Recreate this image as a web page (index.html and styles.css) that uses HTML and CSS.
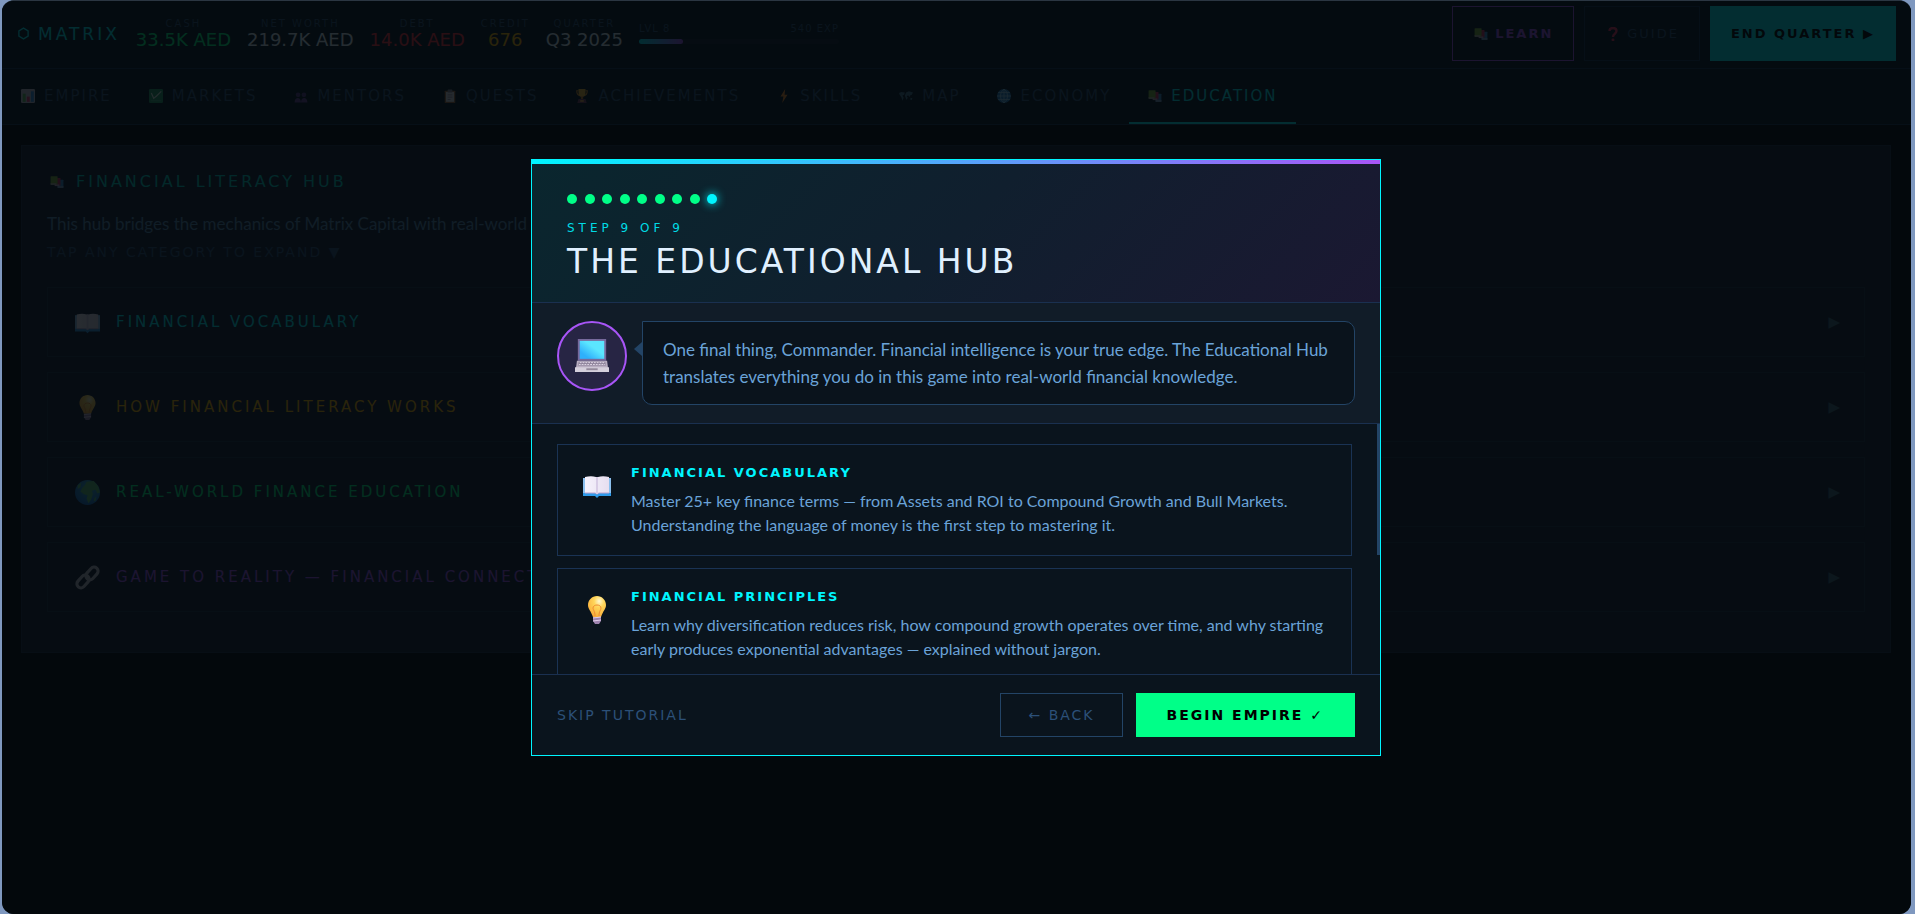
FILE: index.html
```html
<!DOCTYPE html>
<html lang="en">
<head>
    <meta charset="UTF-8">
    <meta name="viewport" content="width=device-width, initial-scale=1.0">
    <title>Matrix Capital</title>
    <link rel="stylesheet" href="styles.css">
</head>
<body>

<!-- Icon sprite -->
<svg class="sprite" aria-hidden="true">
    <defs>
        <linearGradient id="screen" x1="0" y1="1" x2="1" y2="0">
            <stop offset="0.2" stop-color="#2eb0fb"/>
            <stop offset="0.6" stop-color="#5be6ff"/>
        </linearGradient>
        <radialGradient id="glass" cx="0.62" cy="0.25" r="0.8">
            <stop offset="0" stop-color="#fff8d0"/>
            <stop offset="0.35" stop-color="#ffd65a"/>
            <stop offset="1" stop-color="#f9a936"/>
        </radialGradient>
        <radialGradient id="sea" cx="0.6" cy="0.3" r="0.8">
            <stop offset="0" stop-color="#3fb0d8"/>
            <stop offset="1" stop-color="#1668c8"/>
        </radialGradient>
        <linearGradient id="page" x1="0" y1="0" x2="1" y2="0">
            <stop offset="0" stop-color="#f6f2fc"/>
            <stop offset="1" stop-color="#e6def0"/>
        </linearGradient>
    </defs>
    <symbol id="i-hex" viewBox="0 0 24 24">
        <path d="M12 2l8.500 5v10L12 22l-8.500-5V7z" fill="none" stroke="currentColor" stroke-width="2.500"/>
    </symbol>
    <symbol id="i-books" viewBox="0 0 24 24">
        <rect x="13" y="8" width="10" height="14" rx="1" fill="#3a8bd0"/>
        <rect x="13" y="19" width="10" height="3" fill="#8aa0c8"/>
        <rect x="8" y="5" width="10" height="13" rx="1" fill="#d02f68"/>
        <rect x="8" y="16" width="8" height="3" fill="#b8a0c0"/>
        <rect x="1" y="2" width="12" height="14" rx="1" fill="#7fb23c"/>
        <rect x="1" y="14" width="10" height="3" fill="#b6b8a8"/>
    </symbol>
    <symbol id="i-chart" viewBox="0 0 24 24">
        <rect x="0" y="0" width="24" height="24" rx="2" fill="#c8c4d4"/>
        <rect x="3" y="8" width="5" height="14" fill="#5cb860"/>
        <rect x="10" y="13" width="5" height="9" fill="#e0407c"/>
        <rect x="17" y="4" width="5" height="18" fill="#3a94e8"/>
    </symbol>
    <symbol id="i-trend" viewBox="0 0 24 24">
        <rect x="0" y="0" width="24" height="24" rx="2" fill="#259a68"/>
        <path d="M4 7l4 9 5-4 8-8" fill="none" stroke="#d8f4e4" stroke-width="2"/>
        <path d="M3 20h18" stroke="#5cc494" stroke-width="1"/>
    </symbol>
    <symbol id="i-people" viewBox="0 0 24 24">
        <circle cx="7" cy="10" r="4" fill="#583a88"/>
        <circle cx="17" cy="10" r="4" fill="#583a88"/>
        <path d="M1 23c0-10 11-10 11 0zM12 23c0-10 11-10 11 0z" fill="#6a459c"/>
    </symbol>
    <symbol id="i-clip" viewBox="0 0 24 24">
        <rect x="3" y="3" width="18" height="21" rx="1" fill="#a0683c"/>
        <rect x="5" y="5" width="14" height="17" fill="#e4e0ec"/>
        <rect x="8" y="1" width="8" height="5" rx="1" fill="#8c8898"/>
        <path d="M8 10h8M8 14h8M8 18h5" stroke="#9a94ac" stroke-width="1.500"/>
    </symbol>
    <symbol id="i-trophy" viewBox="0 0 24 24">
        <path d="M6 3H3c0 6 2 8 6 8M18 3h3c0 6-2 8-6 8" fill="none" stroke="#d8902c" stroke-width="2"/>
        <path d="M6 0h12v7c0 5-3 7-6 7s-6-2-6-7z" fill="#f8b838"/>
        <path d="M10 13h4v4h-4z" fill="#c8782c"/>
        <path d="M6 17h12l2 7H4z" fill="#7c4060"/>
        <rect x="9" y="19" width="6" height="3" fill="#e8a848"/>
    </symbol>
    <symbol id="i-bolt" viewBox="0 0 24 24">
        <path d="M14 0L6 13h5L9 24l9-14h-5z" fill="#f88c2c"/>
    </symbol>
    <symbol id="i-map" viewBox="0 0 24 24">
        <path d="M0 7l4-2 6 1-1 4-3 1 2 4-2 5-2-6-3-4zM12 6l5-2 7 2-2 4-3 1-1 3-2-3-3 1 2 3-2 4-2-5-1-3zM20 15l3 1-1 3-3-1z" fill="#44708c"/>
    </symbol>
    <symbol id="i-globe" viewBox="0 0 24 24">
        <circle cx="12" cy="12" r="12" fill="#2c86d0"/>
        <path d="M12 0v24M0 12h24M2 6h20M2 18h20M12 0c-8 6-8 18 0 24M12 0c8 6 8 18 0 24" fill="none" stroke="#a4dcf8" stroke-width="1.300"/>
    </symbol>
    <symbol id="i-question" viewBox="0 0 24 24">
        <path d="M6 7c0-7 12-7 12 0 0 5-6 4-6 10" fill="none" stroke="#f03460" stroke-width="4"/>
        <circle cx="12" cy="22" r="2.500" fill="#f03460"/>
    </symbol>
    <symbol id="i-openbook" viewBox="0 0 28 28">
        <path d="M0 6h28v18H16l-2 2-2-2H0z" fill="#2f9bea"/>
        <path d="M0 6h28v15H0z" fill="#8cc0ee"/>
        <path d="M2 5c4-1 8-1 11 0h2c3-1 7-1 11 0v16H2z" fill="url(#page)"/>
        <path d="M2 21h10l2 1 2-1h10" fill="none" stroke="#bba2cc" stroke-width="1"/>
        <path d="M13 5h2v17h-2z" fill="#d8cce6"/>
    </symbol>
    <symbol id="i-bulb" viewBox="0 0 28 28">
        <path d="M14 0c-5 0-9 4-9 9 0 4 3 6 5 12h8c2-6 5-8 5-12 0-5-4-9-9-9z" fill="url(#glass)"/>
        <path d="M12 20c0-5-2-6-2-8s2-3 4-3 4 1 4 3-2 3-2 8" fill="none" stroke="#ef8c32" stroke-width="1"/>
        <path d="M10 21h8v4l-2 3h-4l-2-3z" fill="#9d82ae"/>
        <path d="M10 22l8-1M10 25l8-1" stroke="#e0cdea" stroke-width="1"/>
    </symbol>
    <symbol id="i-earth" viewBox="0 0 28 28">
        <circle cx="14" cy="14" r="14" fill="url(#sea)"/>
        <path d="M13 2l8-1 5 6 2 7-3 1-2-4-4 1 1 4-2 6-3 4-2-5 1-4-4-1-4-3 2-4 3-3z" fill="#5cc078"/>
        <path d="M3 6l4-3-1 5-3 2zM22 20l2-1-1 4-2 1z" fill="#5cc078"/>
    </symbol>
    <symbol id="i-link" viewBox="0 0 28 28">
        <g fill="none" stroke="#c4c0cc" stroke-width="3.500">
            <rect x="11" y="5" width="16" height="9" rx="4.500" transform="rotate(-48 19 9.500)"/>
            <rect x="1" y="14" width="16" height="9" rx="4.500" transform="rotate(-48 9 18.500)"/>
        </g>
    </symbol>
    <symbol id="i-laptop" viewBox="0 0 36 36">
        <path d="M3 0h30v23H3z" fill="#77699c"/>
        <path d="M5 2h26v19H5z" fill="url(#screen)"/>
        <path d="M2 23h32l1 8H1z" fill="#b7acc0"/>
        <path d="M4 24h28l1 4H3z" fill="#8d829a"/>
        <path d="M5 25h26M4 27h28" stroke="#e1d9e8" stroke-width="1" stroke-dasharray="2 1"/>
        <path d="M0 30h36v5H0z" fill="#d5cfdc"/>
        <path d="M12 31h12v2H12z" fill="#94899c"/>
    </symbol>
</svg>

<div class="app">

    <!-- Top bar -->
    <header class="topbar">
        <div class="logo"><svg class="logo-mark"><use href="#i-hex"/></svg>MATRIX</div>
        <div class="stat"><span class="stat-label">CASH</span><span class="stat-value green">33.5K AED</span></div>
        <div class="stat"><span class="stat-label">NET WORTH</span><span class="stat-value">219.7K AED</span></div>
        <div class="stat"><span class="stat-label">DEBT</span><span class="stat-value red">14.0K AED</span></div>
        <div class="stat"><span class="stat-label">CREDIT</span><span class="stat-value gold">676</span></div>
        <div class="stat"><span class="stat-label">QUARTER</span><span class="stat-value">Q3 2025</span></div>
        <div class="level">
            <div class="level-text"><span>LVL 8</span><span>540 EXP</span></div>
            <div class="level-bar"><div class="level-fill"></div></div>
        </div>
        <div class="actions">
            <button class="btn btn-learn"><svg class="icon"><use href="#i-books"/></svg>LEARN</button>
            <button class="btn btn-guide"><svg class="icon"><use href="#i-question"/></svg>GUIDE</button>
            <button class="btn btn-end">END QUARTER ▶</button>
        </div>
    </header>

    <!-- Tabs -->
    <nav class="tabs">
        <button class="tab"><svg class="icon"><use href="#i-chart"/></svg>EMPIRE</button>
        <button class="tab"><svg class="icon"><use href="#i-trend"/></svg>MARKETS</button>
        <button class="tab"><svg class="icon"><use href="#i-people"/></svg>MENTORS</button>
        <button class="tab"><svg class="icon"><use href="#i-clip"/></svg>QUESTS</button>
        <button class="tab"><svg class="icon"><use href="#i-trophy"/></svg>ACHIEVEMENTS</button>
        <button class="tab"><svg class="icon"><use href="#i-bolt"/></svg>SKILLS</button>
        <button class="tab"><svg class="icon"><use href="#i-map"/></svg>MAP</button>
        <button class="tab"><svg class="icon"><use href="#i-globe"/></svg>ECONOMY</button>
        <button class="tab active"><svg class="icon"><use href="#i-books"/></svg>EDUCATION</button>
    </nav>

    <!-- Education hub -->
    <main class="hub">
        <h2 class="hub-title"><svg class="icon"><use href="#i-books"/></svg>FINANCIAL LITERACY HUB</h2>
        <p class="hub-text">This hub bridges the mechanics of Matrix Capital with real-world f</p>
        <p class="hub-hint">TAP ANY CATEGORY TO EXPAND ▼</p>
        <div class="categories">
            <button class="category cyan"><svg class="category-icon"><use href="#i-openbook"/></svg><span>FINANCIAL VOCABULARY</span><span class="arrow">▶</span></button>
            <button class="category gold"><svg class="category-icon"><use href="#i-bulb"/></svg><span>HOW FINANCIAL LITERACY WORKS</span><span class="arrow">▶</span></button>
            <button class="category green"><svg class="category-icon"><use href="#i-earth"/></svg><span>REAL-WORLD FINANCE EDUCATION</span><span class="arrow">▶</span></button>
            <button class="category purple"><svg class="category-icon"><use href="#i-link"/></svg><span>GAME TO REALITY — FINANCIAL CONNECT</span><span class="arrow">▶</span></button>
        </div>
    </main>

    <!-- Tutorial -->
    <div class="overlay">
        <section class="modal" role="dialog" aria-labelledby="step-title">
            <div class="modal-bar"></div>
            <div class="modal-head">
                <div class="dots">
                    <span class="dot"></span><span class="dot"></span><span class="dot"></span>
                    <span class="dot"></span><span class="dot"></span><span class="dot"></span>
                    <span class="dot"></span><span class="dot"></span><span class="dot current"></span>
                </div>
                <div class="step">STEP 9 OF 9</div>
                <h1 id="step-title" class="modal-title">THE EDUCATIONAL HUB</h1>
            </div>

            <div class="mentor">
                <div class="avatar"><svg class="avatar-icon"><use href="#i-laptop"/></svg></div>
                <p class="bubble">One final thing, Commander. Financial intelligence is your true edge. The Educational Hub translates everything you do in this game into real-world financial knowledge.</p>
            </div>

            <div class="modal-body">
                <div class="cards">
                    <article class="card">
                        <svg class="card-icon"><use href="#i-openbook"/></svg>
                        <div>
                            <h3 class="card-title">FINANCIAL VOCABULARY</h3>
                            <p class="card-text">Master 25+ key finance terms — from Assets and ROI to Compound Growth and Bull Markets. Understanding the language of money is the first step to mastering it.</p>
                        </div>
                    </article>
                    <article class="card">
                        <svg class="card-icon"><use href="#i-bulb"/></svg>
                        <div>
                            <h3 class="card-title">FINANCIAL PRINCIPLES</h3>
                            <p class="card-text">Learn why diversification reduces risk, how compound growth operates over time, and why starting early produces exponential advantages — explained without jargon.</p>
                        </div>
                    </article>
                </div>
                <div class="scroll-thumb"></div>
            </div>

            <div class="modal-foot">
                <button class="skip">SKIP TUTORIAL</button>
                <button class="btn btn-back">← BACK</button>
                <button class="btn btn-begin">BEGIN EMPIRE ✓</button>
            </div>
        </section>
    </div>
</div>

</body>
</html>
```
FILE: styles.css
```css
:root {
    --display: "DejaVu Sans", sans-serif;
    --text: Lato, sans-serif;
    --cyan: #00f5ff;
    --green: #00ff88;
    --purple: #a855f7;
    --gold: #ffb800;
    --red: #ff3040;
    --muted: #2e527a;
    --line: #1a3050;
}

* {
    box-sizing: border-box;
}

body {
    margin: 0;
    padding: 0 4px 0 2px;
    background: #7f98bf;
    font-family: var(--text);
}

h1, h2, h3, p {
    margin: 0;
    font-weight: normal;
}

button {
    font-family: var(--display);
    background: none;
    border: none;
    padding: 0;
    cursor: pointer;
}

.sprite {
    position: absolute;
    width: 0;
    height: 0;
}

.app {
    position: relative;
    min-height: 100vh;
    overflow: hidden;
    background: #020608;
    border-top: 1px solid #2b3642;
    border-radius: 12px;
}

.icon {
    width: 16px;
    height: 14px;
    flex: none;
}

.cyan { color: var(--cyan); }
.green { color: var(--green); }
.gold { color: var(--gold); }
.red { color: var(--red); }
.purple { color: var(--purple); }

/* Top bar */
.topbar {
    display: flex;
    align-items: center;
    gap: 16px;
    padding: 5px 15px 7px;
    background: #0b1622;
    border-bottom: 1px solid var(--line);
    font-family: var(--display);
    white-space: nowrap;
}

.logo {
    display: flex;
    align-items: center;
    gap: 8px;
    font-size: 17px;
    letter-spacing: 3px;
    color: var(--cyan);
}

.logo-mark {
    width: 13px;
    height: 13px;
}

.stat {
    display: flex;
    flex-direction: column;
    align-items: center;
}

.stat-label {
    font-size: 10px;
    line-height: 12px;
    letter-spacing: 2px;
    color: var(--muted);
}

.stat-value {
    font-size: 18px;
    line-height: 20px;
}

.stat-value:not(.green):not(.red):not(.gold) {
    color: #e0f0ff;
}

.level {
    width: 200px;
}

.level-text {
    display: flex;
    justify-content: space-between;
    font-size: 10px;
    line-height: 12px;
    letter-spacing: 1px;
    color: var(--muted);
}

.level-bar {
    height: 5px;
    margin-top: 4px;
    border-radius: 3px;
    background: #152030;
}

.level-fill {
    width: 22%;
    height: 100%;
    border-radius: 3px;
    background: linear-gradient(90deg, var(--cyan), var(--purple));
}

.actions {
    display: flex;
    gap: 10px;
    margin-left: auto;
}

.btn {
    display: flex;
    align-items: center;
    justify-content: center;
    gap: 6px;
    border: 1px solid transparent;
    font-size: 13px;
    letter-spacing: 2px;
}

.topbar .btn {
    height: 55px;
    padding: 0 20px;
}

.btn-learn {
    border-color: var(--purple);
    color: var(--purple);
    font-weight: bold;
}

.btn-guide {
    border-color: var(--line);
    color: var(--muted);
}

.btn-end {
    background: var(--cyan);
    color: #000;
    font-weight: bold;
}

/* Tabs */
.tabs {
    display: flex;
    background: #0b1622;
    border-bottom: 1px solid var(--line);
}

.tab {
    display: flex;
    align-items: center;
    gap: 8px;
    height: 55px;
    padding: 0 18px;
    border-bottom: 2px solid transparent;
    font-size: 15px;
    letter-spacing: 2px;
    color: var(--muted);
}

.tab.active {
    color: var(--cyan);
    border-color: var(--cyan);
}

/* Education hub */
.hub {
    margin: 20px 20px 0 19px;
    padding: 26px 25px 40px;
    background: #161e34;
    border: 1px solid #1c2c44;
}

.hub-title {
    display: flex;
    align-items: center;
    gap: 11px;
    padding-left: 2px;
    font-family: var(--display);
    font-size: 16px;
    line-height: 20px;
    letter-spacing: 3px;
    color: #00d8c8;
}

.hub-text {
    margin-top: 18px;
    font-size: 17px;
    line-height: 28px;
    color: #5a8ab4;
}

.hub-hint {
    margin-top: 4px;
    font-family: var(--display);
    font-size: 14px;
    line-height: 20px;
    letter-spacing: 2px;
    color: var(--muted);
}

.categories {
    display: flex;
    flex-direction: column;
    gap: 15px;
    margin-top: 25px;
}

.category {
    display: flex;
    align-items: center;
    gap: 16px;
    height: 70px;
    padding: 0 24px 0 27px;
    border: 1px solid #1c3048;
    font-size: 15px;
    letter-spacing: 3px;
}

.category-icon {
    width: 25px;
    height: 25px;
}

.arrow {
    margin-left: auto;
    letter-spacing: 0;
    color: #3c6478;
}

/* Tutorial */
.overlay {
    position: absolute;
    inset: 0;
    display: flex;
    align-items: center;
    justify-content: center;
    padding: 0 1px 1px 0;
    background: rgba(4, 9, 13, 0.85);
}

.modal {
    width: 850px;
    max-width: 100%;
    background: #0a141d;
    border: 1px solid var(--cyan);
}

.modal-bar {
    height: 4px;
    background: linear-gradient(90deg, var(--cyan), var(--purple));
}

.modal-head {
    padding: 30px 35px 20px;
    background: linear-gradient(135deg, #0a262e, #101f2e 50%, #1b1832);
    border-bottom: 1px solid var(--line);
}

.dots {
    display: flex;
    justify-content: space-between;
    width: 150px;
}

.dot {
    width: 10px;
    height: 10px;
    border-radius: 50%;
    background: var(--green);
}

.dot.current {
    background: var(--cyan);
    box-shadow: 0 0 10px var(--cyan);
}

.step {
    margin-top: 16px;
    font-family: var(--display);
    font-size: 12px;
    line-height: 16px;
    letter-spacing: 4px;
    color: #00dce6;
}

.modal-title {
    margin-top: 6px;
    font-family: var(--display);
    font-size: 33px;
    line-height: 40px;
    letter-spacing: 3px;
    color: #e0f0ff;
}

.mentor {
    display: flex;
    align-items: flex-start;
    gap: 15px;
    padding: 18px 25px;
    background: #111c28;
    border-bottom: 1px solid var(--line);
}

.avatar {
    display: flex;
    align-items: center;
    justify-content: center;
    flex: none;
    width: 70px;
    height: 70px;
    border: 2px solid var(--purple);
    border-radius: 50%;
    background: #272544;
}

.avatar-icon {
    width: 34px;
    height: 36px;
}

.bubble {
    position: relative;
    flex: 1;
    padding: 14px 20px;
    border: 1px solid #234466;
    border-radius: 0 10px 10px 10px;
    background: #0a131c;
    font-size: 17px;
    line-height: 27px;
    color: #6aa3d8;
}

.bubble::before {
    content: "";
    position: absolute;
    left: -9px;
    top: 20px;
    border: solid transparent;
    border-width: 7px 8px 7px 0;
    border-right-color: #234466;
}

.modal-body {
    position: relative;
    height: 250px;
    overflow: hidden;
}

.cards {
    display: flex;
    flex-direction: column;
    gap: 12px;
    padding: 20px 28px 20px 25px;
}

.card {
    display: flex;
    gap: 20px;
    padding: 18px 25px;
    border: 1px solid #1a3354;
}

.card-icon {
    flex: none;
    width: 28px;
    height: 28px;
    margin-top: 9px;
}

.card-title {
    font-family: var(--display);
    font-size: 13px;
    line-height: 20px;
    font-weight: bold;
    letter-spacing: 2px;
    color: var(--cyan);
}

.card-text {
    margin-top: 6px;
    font-size: 16px;
    line-height: 24px;
    color: #6aa3d8;
}

.scroll-thumb {
    position: absolute;
    top: 0;
    right: 0;
    width: 3px;
    height: 131px;
    background: #234466;
}

.modal-foot {
    display: flex;
    align-items: center;
    gap: 13px;
    padding: 18px 25px;
    border-top: 1px solid var(--line);
}

.skip {
    margin-right: auto;
    font-size: 14px;
    letter-spacing: 2px;
    color: #2c5078;
}

.modal-foot .btn {
    height: 44px;
    padding: 0 27px;
    font-size: 14px;
}

.btn-back {
    border-color: #234466;
    color: #2c5078;
}

.modal-foot .btn-begin {
    padding: 0 30px;
    background: var(--green);
    color: #000;
    font-weight: bold;
}
```
